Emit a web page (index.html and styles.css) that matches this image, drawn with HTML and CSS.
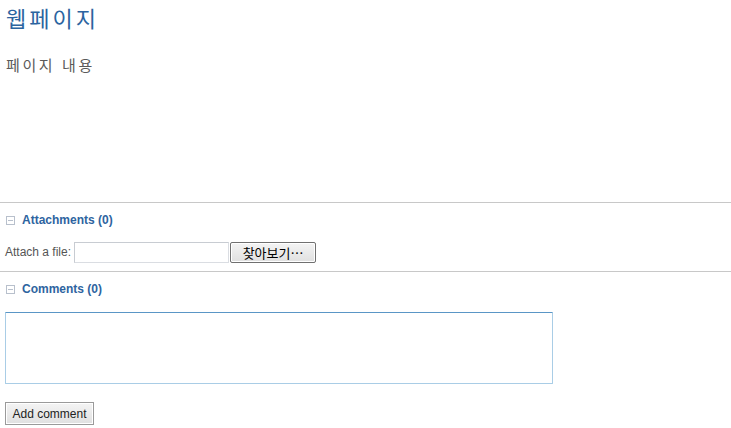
FILE: index.html
```html
<!DOCTYPE html>
<html lang="ko">
<head>
<meta charset="utf-8">
<link rel="stylesheet" href="styles.css">
</head>
<body>
<div class="page">
  <h1 class="title">웹페이지</h1>
  <p class="content">페이지 내용</p>
</div>
<section class="block">
  <h3 class="foldable"><span class="fold-icon"></span>Attachments (0)</h3>
  <div class="attach-row">
    <label class="attach-label">Attach a file:</label>
    <span class="file-input"></span>
    <button class="btn browse">찾아보기…</button>
  </div>
</section>
<section class="block">
  <h3 class="foldable"><span class="fold-icon"></span>Comments (0)</h3>
  <textarea class="comment-box"></textarea>
  <button class="btn add">Add comment</button>
</section>
</body>
</html>
```
FILE: styles.css
```css
html, body {
  margin: 0;
  padding: 0;
  background: #fff;
}
body {
  font-family: "Liberation Sans", Arial, sans-serif;
  font-size: 12px;
  color: #555;
}
.page {
  padding: 0 6px;
  height: 202px;
  box-sizing: border-box;
}
.title {
  margin: 0;
  padding-top: 3px;
  font-family: "Noto Sans CJK KR", sans-serif;
  font-weight: normal;
  font-size: 22px;
  line-height: 28px;
  letter-spacing: 3px;
  color: #2b64a0;
}
.content {
  margin: 24px 0 0;
  font-family: "Noto Sans CJK KR", sans-serif;
  font-size: 15px;
  line-height: 20px;
  letter-spacing: 2.6px;
  color: #5a5a5a;
}
.block {
  border-top: 1px solid #c8c8c8;
  padding: 0 5px;
}
.foldable {
  margin: 0;
  display: flex;
  align-items: center;
  height: 34px;
  font-size: 12px;
  font-weight: bold;
  color: #2e64a0;
}
.fold-icon {
  width: 7px;
  height: 7px;
  border: 1px solid #b8c0cc;
  margin: 0 7px 0 1px;
  position: relative;
}
.fold-icon::after {
  content: "";
  position: absolute;
  left: 1px;
  right: 1px;
  top: 3px;
  height: 1px;
  background: #b8c0cc;
}
.attach-row {
  display: flex;
  align-items: center;
  height: 22px;
  margin-top: 4px;
  padding-bottom: 8px;
}
.attach-label {
  margin-right: 3px;
}
.file-input {
  width: 153px;
  height: 19px;
  border: 1px solid #dadde2;
  border-top-color: #c8ccd2;
  border-left-color: #c8ccd2;
  background: #fff;
}
.btn {
  font-family: "Liberation Sans", Arial, sans-serif;
  font-size: 12px;
  color: #000;
  background: linear-gradient(#f4f4f4, #e0e0e0);
  border: 1px solid #707070;
  border-radius: 2px;
  padding: 0;
  box-shadow: inset 0 0 0 1px #fff;
}
.browse {
  width: 86px;
  height: 21px;
  margin-left: 1px;
  font-family: "Noto Sans CJK KR", sans-serif;
  font-size: 13px;
  line-height: 17px;
}
.comment-box {
  display: block;
  width: 548px;
  height: 72px;
  box-sizing: border-box;
  margin: 6px 0 0;
  border: 1px solid #a9cde6;
  border-top-color: #5a96c6;
  border-radius: 1px;
  resize: none;
}
.add {
  display: block;
  margin-top: 18px;
  width: 89px;
  height: 23px;
  border-color: #9a9a9a;
  border-radius: 0;
  color: #222;
}
```
